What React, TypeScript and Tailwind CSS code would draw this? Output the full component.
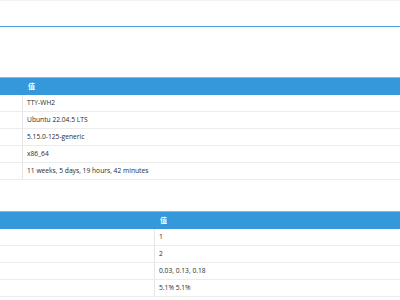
import React from "react";

const rows1 = [
  "TTY-WH2",
  "Ubuntu 22.04.5 LTS",
  "5.15.0-125-generic",
  "x86_64",
  "11 weeks, 5 days, 19 hours, 42 minutes",
];
const rows2 = ["1", "2", "0.03, 0.13, 0.18", "5.1% 5.1%"];

function Table({ keyW, rows }: { keyW: string; rows: string[] }) {
  return (
    <div className="w-full">
      <div className="flex h-[18px] bg-[#3498db] border-t border-[#7fbdea] items-center">
        <div className={`${keyW} shrink-0`} />
        <div className="pl-[5px] text-white font-bold text-[7px] leading-none">值</div>
      </div>
      {rows.map((r, i) => (
        <div key={i} className="flex h-[17px] border-b border-[#ececec] items-center">
          <div className={`${keyW} shrink-0 h-full border-r border-[#e6e6e6]`} />
          <div className="pl-[4px] text-[#2a2a2a] text-[6.7px] leading-none">{r}</div>
        </div>
      ))}
    </div>
  );
}

export default function App() {
  return (
    <div
      className="w-[400px] h-[300px] bg-white overflow-hidden"
      style={{ fontFamily: '"Open Sans", "Noto Sans CJK SC", sans-serif' }}
    >
      <div className="h-px bg-[#f2f2f2]" />
      <div className="h-[25px]" />
      <div className="h-px bg-[#4aa6e6]" />
      <div className="h-[50px]" />
      <Table keyW="w-[23px]" rows={rows1} />
      <div className="h-[31px]" />
      <Table keyW="w-[155px]" rows={rows2} />
    </div>
  );
}
